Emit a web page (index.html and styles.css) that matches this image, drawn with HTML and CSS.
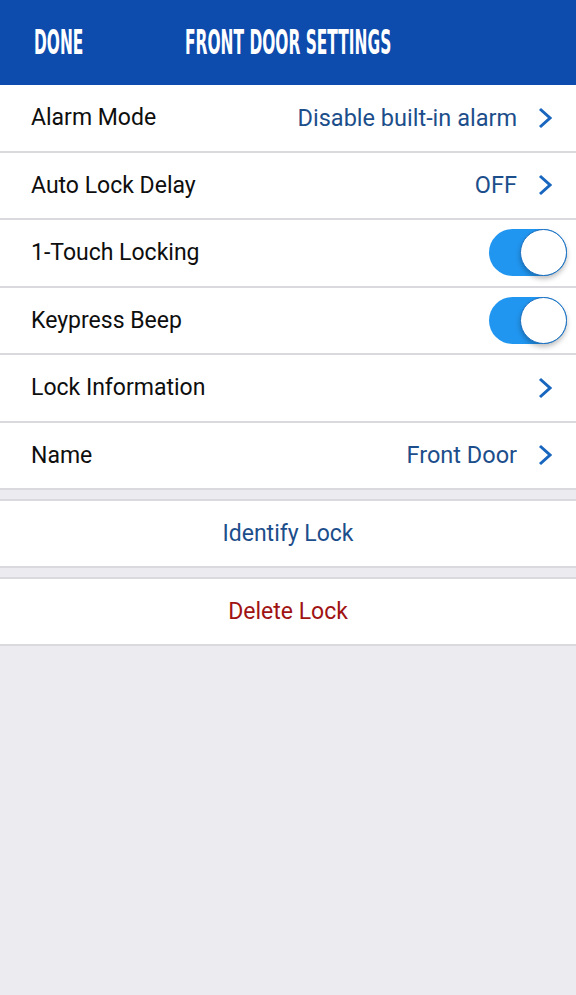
FILE: index.html
```html
<!DOCTYPE html>
<html lang="en">
<head>
    <meta charset="UTF-8">
    <meta name="viewport" content="width=device-width, initial-scale=1.0">
    <title>Front Door Settings</title>
    <link rel="stylesheet" href="styles.css">
</head>
<body>
    <div class="header">
        <div class="header-left"><span class="header-text">Done</span></div>
        <span class="header-text">Front Door Settings</span>
    </div>

    <div class="group">
        <div class="row">
            <span class="label">Alarm Mode</span>
            <span class="value">Disable built-in alarm</span>
            <svg class="chevron" viewBox="0 0 14 22"><path d="M2 2 L12 11 L2 20" /></svg>
        </div>
        <div class="row">
            <span class="label">Auto Lock Delay</span>
            <span class="value">OFF</span>
            <svg class="chevron" viewBox="0 0 14 22"><path d="M2 2 L12 11 L2 20" /></svg>
        </div>
        <div class="row">
            <span class="label">1-Touch Locking</span>
            <div class="toggle"><div class="knob"></div></div>
        </div>
        <div class="row">
            <span class="label">Keypress Beep</span>
            <div class="toggle"><div class="knob"></div></div>
        </div>
        <div class="row">
            <span class="label">Lock Information</span>
            <svg class="chevron" viewBox="0 0 14 22"><path d="M2 2 L12 11 L2 20" /></svg>
        </div>
        <div class="row">
            <span class="label">Name</span>
            <span class="value">Front Door</span>
            <svg class="chevron" viewBox="0 0 14 22"><path d="M2 2 L12 11 L2 20" /></svg>
        </div>
    </div>

    <div class="group boxed">
        <div class="action">Identify Lock</div>
    </div>

    <div class="group boxed">
        <div class="action danger">Delete Lock</div>
    </div>
</body>
</html>
```

FILE: styles.css
```css
* {
    box-sizing: border-box;
    margin: 0;
    padding: 0;
}

body {
    font-family: 'Roboto', 'Liberation Sans', sans-serif;
    background-color: #ebebf0;
    height: 100vh;
    overflow: hidden;
}

.header {
    height: 85px;
    background-color: #0d4bad;
    display: flex;
    align-items: center;
    padding-left: 34px;
    color: #fff;
    overflow: hidden;
}

.header-left {
    width: 151px;
    flex-shrink: 0;
}

.header-text {
    display: inline-block;
    font-family: 'DejaVu Sans Condensed', 'DejaVu Sans', sans-serif;
    font-stretch: condensed;
    font-weight: bold;
    font-size: 33px;
    text-transform: uppercase;
    white-space: nowrap;
    transform: scaleX(0.52);
    transform-origin: left center;
}

.group {
    background-color: #fff;
}

.group.boxed {
    margin-top: 9px;
    border-top: 2px solid #dadade;
    border-bottom: 2px solid #dadade;
}

.row {
    display: flex;
    align-items: center;
    height: 67.5px;
    padding: 0 24px 0 31px;
    border-bottom: 2px solid #dadade;
    font-size: 23px;
}

.label {
    color: #0e0e0e;
    flex: 1;
}

.value {
    color: #1c4e8b;
    font-size: 23.5px;
    margin-right: 21px;
}

.chevron {
    width: 14px;
    height: 22px;
}

.chevron path {
    fill: none;
    stroke: #1866be;
    stroke-width: 3;
}

.toggle {
    width: 78px;
    height: 47px;
    border-radius: 24px;
    background-color: #2196f0;
    display: flex;
    justify-content: flex-end;
    align-items: center;
    margin-right: -15px;
}

.knob {
    width: 47px;
    height: 47px;
    border-radius: 50%;
    background-color: #fff;
    border: 1.5px solid #1a6fc0;
    box-shadow: 0 3px 5px rgba(0, 0, 0, 0.25);
}

.action {
    height: 65px;
    display: flex;
    align-items: center;
    justify-content: center;
    font-size: 23px;
    color: #1c4e8b;
}

.action.danger {
    color: #a01313;
}
```
